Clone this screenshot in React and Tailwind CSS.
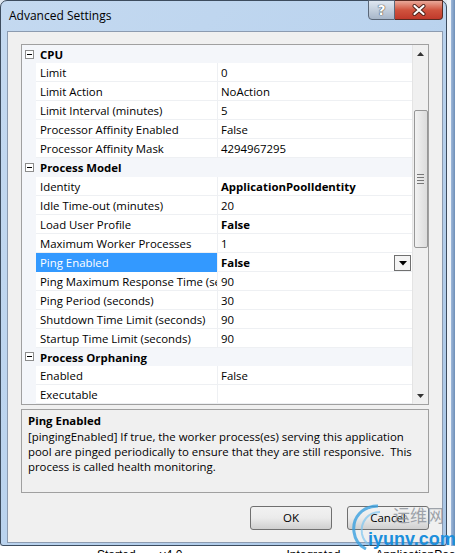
import React from 'react';

const rows = [
    { cat: true, name: 'CPU' },
    { name: 'Limit', value: '0' },
    { name: 'Limit Action', value: 'NoAction' },
    { name: 'Limit Interval (minutes)', value: '5' },
    { name: 'Processor Affinity Enabled', value: 'False' },
    { name: 'Processor Affinity Mask', value: '4294967295' },
    { cat: true, name: 'Process Model' },
    { name: 'Identity', value: 'ApplicationPoolIdentity', bold: true },
    { name: 'Idle Time-out (minutes)', value: '20' },
    { name: 'Load User Profile', value: 'False', bold: true },
    { name: 'Maximum Worker Processes', value: '1' },
    { name: 'Ping Enabled', value: 'False', bold: true, selected: true },
    { name: 'Ping Maximum Response Time (seconds)', value: '90' },
    { name: 'Ping Period (seconds)', value: '30' },
    { name: 'Shutdown Time Limit (seconds)', value: '90' },
    { name: 'Startup Time Limit (seconds)', value: '90' },
    { cat: true, name: 'Process Orphaning' },
    { name: 'Enabled', value: 'False' },
    { name: 'Executable', value: '' },
];

const font = { fontFamily: '"Segoe UI", "Open Sans", "Noto Sans", sans-serif' };

const MinusBox = () => (
    <svg width="9" height="9" viewBox="0 0 9 9">
        <rect x="0.5" y="0.5" width="8" height="8" fill="#fff" stroke="#8c8c8c" />
        <path d="M2 4.5h5" stroke="#000" strokeWidth="1" />
    </svg>
);

const Row = ({ row }) => {
    if (row.cat) {
        return (
            <div className="flex h-[19px] bg-[#f4f6fa]">
                <div className="w-[14px] flex items-center justify-center pl-[1px]">
                    <MinusBox />
                </div>
                <div className="flex-1 pl-[4px] pt-[1px] flex items-center font-bold text-black">{row.name}</div>
            </div>
        );
    }
    return (
        <div className="flex h-[19px]">
            <div className="w-[14px] bg-[#f4f6fa]"></div>
            <div
                className={
                    row.selected
                        ? 'w-[181px] h-[19px] pl-[4px] pt-[1px] flex items-center overflow-hidden whitespace-nowrap bg-[#3399ff] text-white'
                        : 'w-[181px] h-[19px] pl-[4px] pt-[1px] flex items-center overflow-hidden whitespace-nowrap border-b border-[#eef0f3] text-black'
                }
            >
                {row.name}
            </div>
            <div className="w-[1px] bg-[#eef0f3]"></div>
            <div className="flex-1 h-[19px] pl-[3px] pt-[1px] flex items-center justify-between border-b border-[#eef0f3] text-black">
                <span className={row.bold ? 'font-bold' : ''}>{row.value}</span>
                {row.selected && (
                    <div className="w-[17px] h-[16px] mt-[2px] mr-[1px] border border-[#707070] bg-[#f4f4f4] flex items-center justify-center">
                        <svg width="8" height="5" viewBox="0 0 8 5">
                            <path d="M0 0h8L4 4.5z" fill="#000" />
                        </svg>
                    </div>
                )}
            </div>
        </div>
    );
};

const ScrollBar = () => (
    <div className="w-[16px] bg-[#f0f0f0] border-l border-[#e4e4e4] flex flex-col items-center">
        <div className="h-[17px] flex items-center justify-center">
            <svg width="7" height="4" viewBox="0 0 7 4">
                <path d="M3.5 0L7 4H0z" fill="#333" />
            </svg>
        </div>
        <div className="h-[48px]"></div>
        <div className="w-[14px] h-[138px] rounded-[2px] border border-[#979797] bg-gradient-to-r from-[#f2f2f2] to-[#dcdcdc] flex flex-col items-center justify-center gap-[2px]">
            <div className="w-[7px] h-[1px] bg-[#777]"></div>
            <div className="w-[7px] h-[1px] bg-[#777]"></div>
            <div className="w-[7px] h-[1px] bg-[#777]"></div>
            <div className="w-[7px] h-[1px] bg-[#777]"></div>
        </div>
        <div className="flex-1"></div>
        <div className="h-[16px] flex items-center justify-center">
            <svg width="7" height="4" viewBox="0 0 7 4">
                <path d="M0 0h7L3.5 4z" fill="#333" />
            </svg>
        </div>
    </div>
);

const WinButton = ({ children }) => (
    <button className="w-[82px] h-[24px] rounded-[3px] border border-[#707070] bg-gradient-to-b from-[#f2f2f2] via-[#ebebeb] to-[#cfcfcf] text-black text-[11.5px]" style={font}>
        {children}
    </button>
);

export default function App() {
    return (
        <div className="relative w-[455px] h-[553px] bg-[#dfe7f0] overflow-hidden flex flex-col text-[11.4px]" style={font}>
            <div className="flex h-[546px]">
                {/* Window */}
                <div className="w-[447px] h-[546px] rounded-t-[7px] rounded-b-[3px] border border-[#3d4c5e] bg-gradient-to-br from-[#c4d9f0] via-[#bad3ee] to-[#a9c6e6] flex flex-col">
                    {/* Title bar */}
                    <div className="h-[30px] flex items-start justify-between">
                        <div className="pl-[8px] pt-[6px] text-[12px] text-black leading-[18px]">Advanced Settings</div>
                        <div className="flex mr-[3px] mt-[-1px]">
                            <div className="w-[27px] h-[20px] rounded-bl-[4px] border border-[#5a6778] bg-gradient-to-b from-[#dfe7f1] via-[#c3cfdd] to-[#a7b6c9] flex items-center justify-center">
                                <span className="text-white font-bold text-[14px] leading-none" style={{ fontFamily: '"DejaVu Sans", sans-serif', textShadow: '0 0 1px #333, 0 0 1px #333' }}>?</span>
                            </div>
                            <div className="w-[48px] h-[20px] rounded-br-[4px] border border-l-0 border-[#5a2a22] bg-gradient-to-b from-[#e9a899] via-[#d0533e] to-[#c0392b] flex items-center justify-center">
                                <svg width="14" height="12" viewBox="0 0 14 12">
                                    <path d="M2.5 2l9 8M11.5 2l-9 8" stroke="#4a2018" strokeWidth="4" strokeLinecap="round" />
                                    <path d="M2.5 2l9 8M11.5 2l-9 8" stroke="#fff" strokeWidth="2.2" strokeLinecap="round" />
                                </svg>
                            </div>
                        </div>
                    </div>

                    {/* Client area */}
                    <div className="ml-[6px] w-[436px] h-[512px] border border-[#8c9bb0] bg-[#f0f0f0] px-[13px] pt-[12px] flex flex-col">
                        {/* Property grid */}
                        <div className="h-[361px] border border-[#a0a0a0] bg-white flex overflow-hidden">
                            <div className="flex-1 flex flex-col">
                                {rows.map((r, i) => (
                                    <Row key={i} row={r} />
                                ))}
                            </div>
                            <ScrollBar />
                        </div>

                        {/* Description */}
                        <div className="mt-[4px] h-[84px] border border-[#a0a0a0] px-[6px] pt-[2px] text-black whitespace-nowrap">
                            <div className="font-bold leading-[17px]">Ping Enabled</div>
                            <div className="leading-[15px]">
                                [pingingEnabled] If true, the worker process(es) serving this application
                                <br />
                                pool are pinged periodically to ensure that they are still responsive.&nbsp; This
                                <br />
                                process is called health monitoring.
                            </div>
                        </div>

                        {/* Buttons */}
                        <div className="mt-[13px] flex justify-end gap-[15px]">
                            <WinButton>OK</WinButton>
                            <WinButton>Cancel</WinButton>
                        </div>
                    </div>
                </div>

                {/* Background window strip */}
                <div className="flex-1 flex">
                    <div className="w-[4px] bg-[#eef3f9]"></div>
                    <div className="flex-1 bg-gradient-to-r from-[#9fb9da] to-[#6e8fb8]"></div>
                </div>
            </div>

            {/* Background list peeking below */}
            <div className="flex-1 bg-white overflow-hidden">
                <div className="flex text-[12px] leading-[12px] text-black pt-[3px] whitespace-nowrap" style={{ fontFamily: '"Liberation Sans", sans-serif' }}>
                    <span className="ml-[97px]">Started</span>
                    <span className="ml-[24px]">v4.0</span>
                    <span className="ml-[104px]">Integrated</span>
                    <span className="ml-[35px]">ApplicationPool</span>
                </div>
            </div>

            {/* Watermark overlay */}
            <div className="absolute left-[350px] top-[502px] w-[105px] h-[51px] pointer-events-none">
                <svg className="absolute left-0 top-0" width="40" height="48" viewBox="0 0 40 48">
                    <path d="M28 4C12 4 2 16 4 30c1 8 6 14 12 17" stroke="#3aa0e0" strokeWidth="3" fill="none" opacity="0.8" />
                    <path d="M30 10C18 10 10 20 12 32c1 5 4 9 8 11" stroke="#7cc4ef" strokeWidth="2" fill="none" opacity="0.7" />
                </svg>
                <div className="absolute left-[43px] top-[2px] whitespace-nowrap text-[17px] leading-[22px] text-[#8a9099] opacity-80" style={{ fontFamily: '"Noto Sans CJK SC", sans-serif' }}>运维网</div>
                <div className="absolute left-[18px] top-[27px] whitespace-nowrap text-[18px] leading-[20px] font-bold text-[#1c8fdc]" style={{ fontFamily: '"Liberation Sans", sans-serif' }}>iyunv.com</div>
            </div>
        </div>
    );
}
